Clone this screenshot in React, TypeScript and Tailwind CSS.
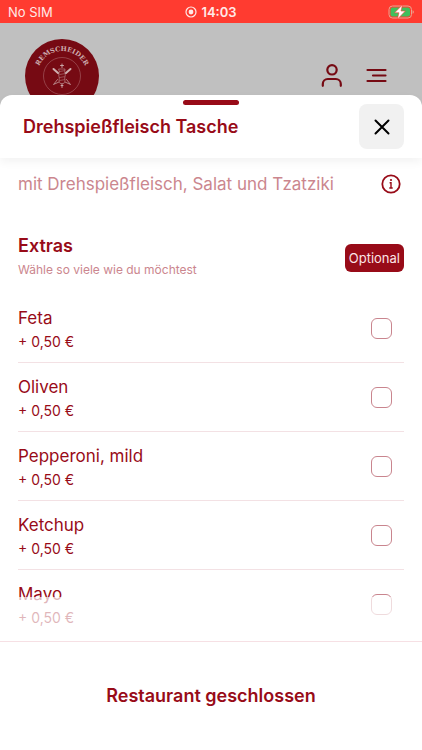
import { useState } from "react";
import type { ReactNode } from "react";

type Extra = {
    id: string;
    name: string;
    price: string;
};

const extras: Extra[] = [
    { id: "feta", name: "Feta", price: "+ 0,50 €" },
    { id: "oliven", name: "Oliven", price: "+ 0,50 €" },
    { id: "pepperoni", name: "Pepperoni, mild", price: "+ 0,50 €" },
    { id: "ketchup", name: "Ketchup", price: "+ 0,50 €" },
    { id: "mayo", name: "Mayo", price: "+ 0,50 €" },
];

const StatusBar = () => (
    <div className="grid h-[23px] grid-cols-3 items-center bg-[#ff3b30] px-2 text-[13px] leading-4 text-[#ffe9e7]">
        <span>No SIM</span>
        <span className="flex items-center justify-center gap-1 font-semibold">
            <svg width="12" height="12" viewBox="0 0 12 12" fill="none" aria-hidden="true">
                <circle cx="6" cy="6" r="5" stroke="currentColor" strokeWidth="1.2" />
                <circle cx="6" cy="6" r="2.4" fill="currentColor" />
            </svg>
            14:03
        </span>
        <span className="flex justify-end">
            <svg width="28" height="16" viewBox="0 0 28 16" aria-hidden="true">
                <rect x="3" y="2" width="22.5" height="12" rx="3.5" fill="none" stroke="#e9a58f" />
                <rect x="4.5" y="3.5" width="19.5" height="9" rx="2" fill="#3fbf5c" />
                <path d="M26.6 6.2v3.6c.8-.3 1.200-1 1.200-1.800s-.4-1.500-1.200-1.800z" fill="#e9a58f" />
                <path d="M16.500 0.800 8.600 8.800h4.300L11.400 15.200 19.400 7h-4.400z" fill="#fff" stroke="#ff3b30" strokeWidth="0.6" />
            </svg>
        </span>
    </div>
);

const Logo = () => (
    <svg width="74" height="74" viewBox="0 0 74 74" className="shrink-0" role="img" aria-label="Remscheider">
        <defs>
            <path id="badge-arc" d="M12 37a25 25 0 0 1 50 0" />
        </defs>
        <circle cx="37" cy="37" r="37" fill="#760a13" />
        <text className="font-['DejaVu_Serif',serif] font-bold" fontSize="6.5" fill="#cfaeb0" textAnchor="middle">
            <textPath href="#badge-arc" startOffset="50%">REMSCHEIDER</textPath>
        </text>
        <circle cx="37" cy="37" r="18.5" fill="none" stroke="#a9656a" strokeWidth="0.6" />
        <g stroke="#cfb0b0" strokeLinecap="round">
            <path d="M28.5 30l4.500 4M45.5 30l-4.500 4" strokeWidth="2" />
            <path d="M32.5 40.500l-4 5 5.500-2.500M41.500 40.500l4 5-5.500-2.500" strokeWidth="0.7" fill="none" />
            <path d="M37 25v3.500M37 45v3.500M35.500 26.500h3M36 46.500h2" strokeWidth="0.9" />
            <path d="M34 30h6l-.3 3 .6 3-.6 3 .3 3-1.200 2.500h-3.600l-1.200-2.500.3-3-.6-3 .6-3z" fill="#760a13" strokeWidth="0.5" />
            <path d="M34.800 32.500l4.400-.8M34.800 35.500l4.400-.8M34.800 38.500l4.400-.8M34.800 41.500l4.400-.8" strokeWidth="0.4" />
        </g>
    </svg>
);

const IconButton = ({ label, children }: { label: string; children: ReactNode }) => (
    <button type="button" aria-label={label} className="flex size-6 items-center justify-center text-[#760a13]">
        {children}
    </button>
);

const TopBar = () => (
    <header className="flex h-[72px] items-start justify-between overflow-hidden pr-[33px] pl-[25px]">
        <div className="pt-4">
            <Logo />
        </div>
        <div className="flex gap-[21px] pt-10">
            <IconButton label="Konto">
                <svg width="24" height="24" viewBox="0 0 24 24" fill="none" stroke="currentColor" strokeWidth="2.2" strokeLinecap="round" aria-hidden="true">
                    <circle cx="12" cy="6.8" r="4.7" />
                    <path d="M2.800 22.800v-1.800a5 5 0 0 1 5-5h8a5 5 0 0 1 5 5v1.800" />
                </svg>
            </IconButton>
            <IconButton label="Menü">
                <svg width="24" height="24" viewBox="0 0 24 24" fill="none" stroke="currentColor" strokeWidth="2.2" strokeLinecap="round" aria-hidden="true">
                    <path d="M2.500 7h18M8 12.500h12.500M2.500 18h18" />
                </svg>
            </IconButton>
        </div>
    </header>
);

type RowProps = {
    extra: Extra;
    checked: boolean;
    onToggle: (id: string) => void;
};

const ExtraRow = ({ extra, checked, onToggle }: RowProps) => (
    <li className="border-b border-[#f3e1e4] last:border-transparent">
        <label htmlFor={extra.id} className="flex h-[68px] items-center justify-between pr-3">
            <span className="flex flex-col pt-1">
                <span className="text-[17px] leading-6">{extra.name}</span>
                <span className="text-sm leading-6">{extra.price}</span>
            </span>
            <input
                id={extra.id}
                type="checkbox"
                checked={checked}
                onChange={() => onToggle(extra.id)}
                className="size-[21px] appearance-none rounded-md border border-[#c9858e] bg-white checked:bg-[#980b18]"
            />
        </label>
    </li>
);

const App = () => {
    const [selected, setSelected] = useState<string[]>([]);

    const handleToggle = (id: string) => {
        setSelected(prev => prev.includes(id) ? prev.filter(s => s !== id) : [...prev, id]);
    };

    return (
        <div className="flex min-h-screen flex-col bg-[#c0c0c0] font-[Inter,sans-serif] text-[#980b18]">
            <StatusBar />
            <TopBar />

            <main className="flex flex-1 flex-col rounded-t-xl bg-white">
                <div className="relative flex h-[63px] items-center justify-between rounded-t-xl pr-[18px] pl-[23px] shadow-[0_4px_10px_rgba(0,0,0,0.05)]">
                    <span className="absolute top-[5px] left-1/2 h-[5px] w-14 -translate-x-1/2 rounded-full bg-[#980b18]" />
                    <h1 className="text-lg leading-6 font-semibold">Drehspießfleisch Tasche</h1>
                    <button type="button" aria-label="Schließen" className="flex size-[45px] items-center justify-center rounded-lg bg-[#f1f1f1] text-black">
                        <svg width="16" height="16" viewBox="0 0 16 16" fill="none" stroke="currentColor" strokeWidth="2" strokeLinecap="round" aria-hidden="true">
                            <path d="M1.500 1.500l13 13M14.500 1.500l-13 13" />
                        </svg>
                    </button>
                </div>

                <div className="relative flex-1 px-[18px]">
                    <div className="flex items-center justify-between pt-3.5 pr-[3px]">
                        <p className="text-[17px] leading-6 text-[#cb868e]">mit Drehspießfleisch, Salat und Tzatziki</p>
                        <button type="button" aria-label="Produktinformationen">
                            <svg width="20" height="20" viewBox="0 0 20 20" fill="none" stroke="currentColor" aria-hidden="true">
                                <circle cx="10" cy="10" r="8.7" strokeWidth="1.8" />
                                <path d="M8.600 8.800H10v5M8.300 14h3.400" strokeWidth="1.4" />
                                <circle cx="10" cy="6" r="1.1" fill="currentColor" stroke="none" />
                            </svg>
                        </button>
                    </div>

                    <div className="flex items-center justify-between pt-[38px]">
                        <div>
                            <h2 className="text-lg leading-6 font-semibold">Extras</h2>
                            <p className="text-xs leading-6 text-[#cb868e]">Wähle so viele wie du möchtest</p>
                        </div>
                        <span className="rounded-md bg-[#980b18] px-1 py-1.5 text-[13px] leading-4 text-[#fbe3e6]">Optional</span>
                    </div>

                    <ul className="pt-3">
                        {extras.map(extra => (
                            <ExtraRow key={extra.id} extra={extra} checked={selected.includes(extra.id)} onToggle={handleToggle} />
                        ))}
                    </ul>

                    <div className="pointer-events-none absolute inset-x-0 bottom-0 h-11 bg-white/70" />
                </div>

                <footer className="border-t border-[#f6e0e4] px-[18px] py-8">
                    <button type="button" className="w-full py-2.5 text-lg leading-6 font-semibold">Restaurant geschlossen</button>
                </footer>
            </main>
        </div>
    );
};

export default App;
